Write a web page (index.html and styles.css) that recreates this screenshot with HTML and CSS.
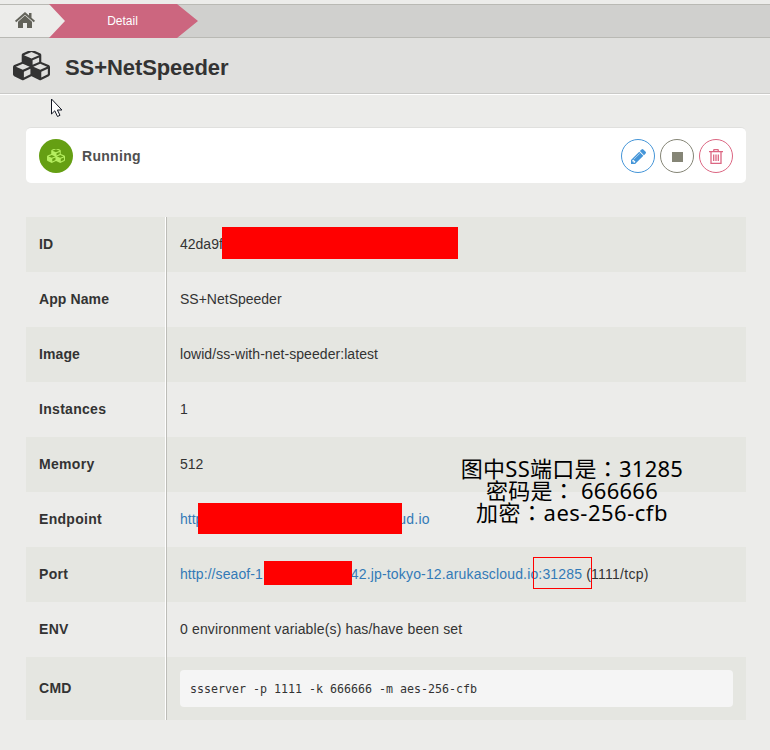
FILE: index.html
```html
<!DOCTYPE html>
<html lang="en">
<head>
<meta charset="utf-8">
<title>SS+NetSpeeder</title>
<link rel="stylesheet" href="styles.css">
</head>
<body>
<svg class="defs" aria-hidden="true">
  <symbol id="cubes" viewBox="0 124 2176 1668">
    <path fill="currentColor" d="M640 1632l384 -192v-314l-384 164v342zM576 1178l404 -173l-404 -173l-404 173zM1664 1632l384 -192v-314l-384 164v342zM1600 1178l404 -173l-404 -173l-404 173zM1152 891l384 -165v-266l-384 164v267zM1088 512l441 -189l-441 -189l-441 189zM2176 1024v416q0 36 -19 67t-52 47l-448 224q-25 14 -57 14t-57 -14l-448 -224q-4 -2 -7 -4q-2 2 -7 4l-448 224q-25 14 -57 14t-57 -14l-448 -224q-33 -16 -52 -47t-19 -67v-416q0 -38 21.5 -70t56.5 -48l434 -186v-400q0 -38 21.5 -70t56.5 -48l448 -192q23 -10 50 -10t50 10l448 192q35 16 56.5 48t21.5 70v400l434 186q36 16 57 48t21 70z"/>
  </symbol>
</svg>
<nav class="breadcrumb">
  <span class="home"><svg width="20" height="17" viewBox="0 0 20 17"><path fill="#63635a" d="M10 3.500 3 9.800V16h5v-5h4v5h5V9.800ZM10 0 0 8.800l1.200 1.500L10 2.800l8.800 7.500L20 8.800l-3.500-3.100V1H14v2.500Z"/></svg></span>
  <span class="crumb">Detail</span>
</nav>
<header class="heading"><svg class="logo"><use href="#cubes"/></svg><h1>SS+NetSpeeder</h1></header>
<svg class="cursor" width="13" height="20" viewBox="0 0 13 20"><path d="M1.500 1v15l3.300-3.200 2.700 5.700 2.500-1.200-2.600-5.300h4.500Z" fill="#fff" stroke="#111522"/></svg>
<main>
  <section class="status">
    <span class="badge"><svg><use href="#cubes"/></svg></span>
    <strong>Running</strong>
    <span class="action edit"><svg width="15" height="15" viewBox="0 149 1515 1515"><path fill="currentColor" d="M363 1536l91 -91l-235 -235l-91 91v107h128v128h107zM886 608q0 -22 -22 -22q-10 0 -17 7l-542 542q-7 7 -7 17q0 22 22 22q10 0 17 -7l542 -542q7 -7 7 -17zM832 416l416 416l-832 832h-416v-416zM1515 512q0 53 -37 90l-166 166l-416 -416l166 -165q36 -38 90 -38q53 0 91 38l235 234q37 39 37 91z"/></svg></span>
    <span class="action stop"><i></i></span>
    <span class="action remove"><svg width="14" height="15" viewBox="0 0 14 15"><path fill="none" stroke="currentColor" stroke-width="1.300" d="M0 2.700h14M4.500 2.700 5 .7h4l.5 2M2 2.700v11.600h10V2.700M4.700 5.500v6.500M7 5.500v6.500M9.300 5.500v6.500"/></svg></span>
  </section>
  <dl class="details">
    <div><dt>ID</dt><dd>42da9f<b class="redact id"></b></dd></div>
    <div><dt>App Name</dt><dd>SS+NetSpeeder</dd></div>
    <div><dt>Image</dt><dd class="image">lowid/ss-with-net-speeder:latest</dd></div>
    <div><dt>Instances</dt><dd>1</dd></div>
    <div><dt>Memory</dt><dd>512</dd></div>
    <div><dt>Endpoint</dt><dd><a>http</a><b class="redact endpoint"></b><a class="domain">ud.io</a></dd></div>
    <div><dt>Port</dt><dd><a class="scheme">http://seaof-1</a><b class="redact host"></b><a class="region">42.jp-tokyo-12.arukascloud.io:31285</a><span class="protocol">(1111/tcp)</span><b class="outline"></b></dd></div>
    <div><dt>ENV</dt><dd class="env">0 environment variable(s) has/have been set</dd></div>
    <div class="command"><dt>CMD</dt><dd><code>ssserver -p 1111 -k 666666 -m aes-256-cfb</code></dd></div>
  </dl>
</main>
<div class="note" lang="zh-CN"><div>图中SS端口是<span class="colon" lang="zh-TW">：</span>31285</div><div>密码是<span class="colon" lang="zh-TW">：</span> 666666</div><div class="cipher">加密<span class="colon" lang="zh-TW">：</span>aes-256-cfb</div></div>
</body>
</html>
```
FILE: styles.css
```css
* { box-sizing: border-box; }
body { margin: 0; padding-top: 4px; height: 750px; position: relative; overflow: hidden; background: #ececea; color: #333; font: 14px/20px "Liberation Sans", Arial, sans-serif; }
.defs { position: absolute; width: 0; height: 0; }
.breadcrumb { height: 34px; display: flex; background: linear-gradient(90deg, #ececea 66px, #d0d0ce 66px); border: solid #b9b9b4; border-width: 1px 0; }
.home { width: 49px; padding: 7px 0 0 15px; }
.home svg { display: block; }
.crumb { width: 149px; margin: -1px 0; padding-right: 2px; background: #cc667f; color: #fff; font-size: 12px; line-height: 34px; text-align: center; clip-path: polygon(0 0, 128px 0, 100% 50%, 128px 100%, 0 100%, 16px 50%); }
.heading { height: 56px; display: flex; align-items: center; padding: 0 0 0 13px; background: #e0e0de; border-bottom: 1px solid #cacac8; box-shadow: 0 1px #fff; }
.logo { width: 37px; height: 30px; color: #333; overflow: visible; }
.heading h1 { margin: 4px 0 0 15px; font-size: 22px; line-height: 26px; letter-spacing: -.08px; }
.cursor { position: absolute; left: 50px; top: 98px; }
main { padding: 33px 24px 0 26px; }
.status { height: 56px; display: flex; align-items: center; padding: 1px 13px 0; background: #fff; border-top: 1px solid #e0e0de; border-radius: 5px; }
.status strong { margin: 0 auto 0 9px; color: #505050; letter-spacing: .3px; }
.badge, .action { width: 34px; height: 34px; display: flex; align-items: center; justify-content: center; border-radius: 50%; }
.badge { background: #659f13; color: #b5ee60; }
.badge svg { width: 18px; height: 14px; overflow: visible; }
.action { border: 1px solid; margin-left: 5px; }
.edit { color: #4495d8; }
.edit svg { margin-top: 1px; }
.stop { color: #858576; }
.stop i { width: 11px; height: 10px; background: currentColor; margin: 2px 0 0; }
.remove { color: #dc6682; }
.details { margin: 34px 0 0; }
.details > div { height: 55px; display: flex; }
.details > div:nth-child(odd) { background: #e5e6e1; }
dt { width: 140px; padding: 0 0 2px 13px; display: flex; align-items: center; border-right: 1px solid #fff; font-weight: bold; letter-spacing: .1px; }
.details > :nth-child(n+4) dt { letter-spacing: .3px; }
dd { flex: 1; margin: 0; padding: 0 13px 2px; display: flex; align-items: center; position: relative; border-left: 1px solid #bdbdb8; white-space: pre; }
a { color: #337ab7; }
.image { letter-spacing: .06px; }
.env { letter-spacing: .14px; }
.details > .command { height: 63px; }
.command dd { padding-bottom: 0; }
code { flex: 1; height: 37px; padding: 1px 10px 0; background: #f5f5f5; border-radius: 4px; font: 11.630px/36px "DejaVu Sans Mono", monospace; }
.redact { background: #f00; position: absolute; }
.id { left: 55px; top: 10px; width: 236px; height: 32px; }
.endpoint { left: 31px; top: 11px; width: 204px; height: 31px; }
.host { left: 97px; top: 14px; width: 88px; height: 24px; }
.domain { margin-left: 195px; letter-spacing: .2px; }
.scheme { letter-spacing: .08px; }
.region { margin-left: 88px; letter-spacing: .16px; }
.protocol { margin-left: 4px; letter-spacing: .25px; }
.outline { position: absolute; left: 366px; top: 10px; width: 59px; height: 32px; border: 1px solid #f00; }
.note { position: absolute; left: 442px; top: 457px; width: 260px; color: #000; font: 22px/22px "Noto Sans", "Noto Sans CJK SC", sans-serif; text-align: center; letter-spacing: .25px; }
.note div { height: 22px; }
.cipher { letter-spacing: .5px; }
.colon { font-family: "Noto Sans CJK TC", sans-serif; line-height: 0; }
```
